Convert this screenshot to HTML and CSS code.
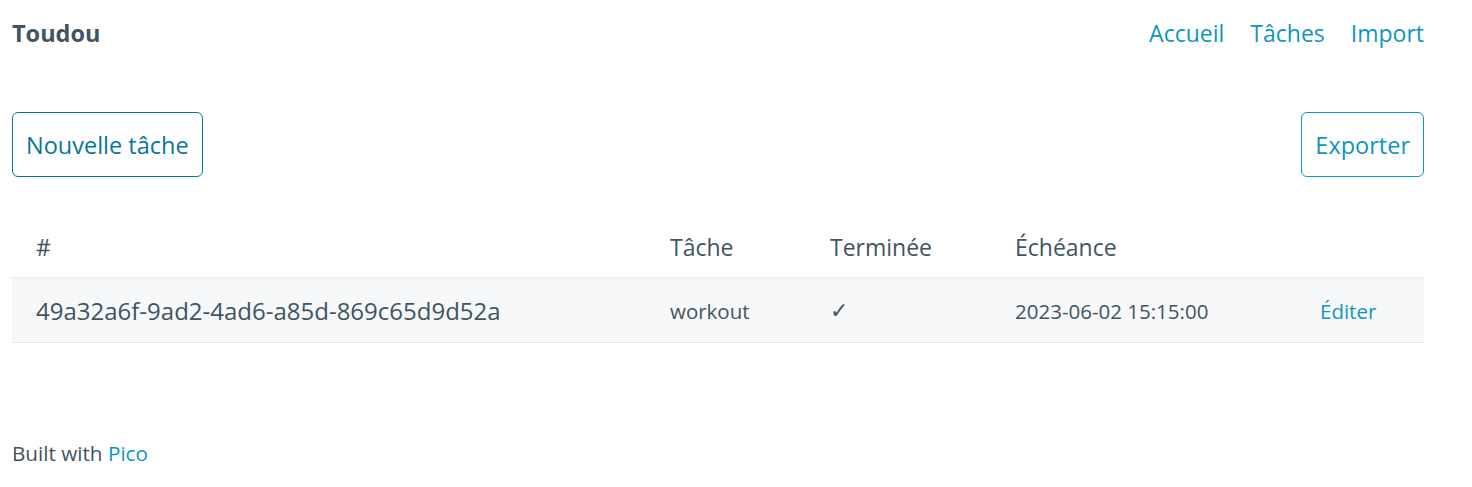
FILE: index.html
```html
<!DOCTYPE html>
<html lang="fr">
<head>
<meta charset="utf-8">
<title>Toudou</title>
<link rel="stylesheet" href="styles.css">
</head>
<body>
<nav class="topbar">
  <strong class="brand">Toudou</strong>
  <ul class="menu">
    <li><a href="#">Accueil</a></li>
    <li><a href="#">Tâches</a></li>
    <li><a href="#">Import</a></li>
  </ul>
</nav>
<main class="content">
  <div class="actions">
    <a href="#" class="btn btn-active">Nouvelle tâche</a>
    <a href="#" class="btn">Exporter</a>
  </div>
  <table class="tasks">
    <colgroup>
      <col class="c-id"><col class="c-task"><col class="c-done"><col class="c-due"><col class="c-edit">
    </colgroup>
    <thead>
      <tr><th>#</th><th>Tâche</th><th>Terminée</th><th>Échéance</th><th></th></tr>
    </thead>
    <tbody>
      <tr>
        <td class="id">49a32a6f-9ad2-4ad6-a85d-869c65d9d52a</td>
        <td>workout</td>
        <td class="check">✓</td>
        <td>2023-06-02 15:15:00</td>
        <td><a href="#">Éditer</a></td>
      </tr>
    </tbody>
  </table>
</main>
<footer class="foot">Built with <a href="#">Pico</a></footer>
</body>
</html>
```

FILE: styles.css
```css
html, body { margin: 0; padding: 0; background: #fff; }
body {
  font-family: "Open Sans", "Noto Sans", sans-serif;
  color: #415462;
  padding: 0 48px 0 12px;
}
a { color: #1095c1; text-decoration: none; }

.topbar {
  display: flex;
  justify-content: space-between;
  align-items: center;
  height: 66px;
}
.brand { font-size: 23.5px; font-weight: 700; color: #415462; }
.menu { display: flex; gap: 26px; list-style: none; margin: 0; padding: 0; font-size: 23px; }

.content { padding-top: 46px; }
.actions { display: flex; justify-content: space-between; }
.btn {
  display: flex;
  align-items: center;
  height: 63px;
  padding: 0 13px;
  border: 1px solid #1095c1;
  border-radius: 6px;
  font-size: 23.5px;
  color: #1095c1;
}
.btn-active { color: #08769b; border-color: #08769b; }

.tasks {
  width: 100%;
  margin-top: 40px;
  border-collapse: collapse;
  table-layout: fixed;
}
.c-id { width: 634px; }
.c-task { width: 160px; }
.c-done { width: 185px; }
.c-due { width: 305px; }
.tasks th {
  height: 60px;
  text-align: left;
  font-weight: 400;
  font-size: 23px;
  padding: 0 24px;
  border-bottom: 2px solid #edf0f3;
}
.tasks td {
  height: 63px;
  padding: 0 24px;
  font-size: 20.5px;
  background: #f6f8f9;
  border-bottom: 1px solid #e1e6eb;
  white-space: nowrap;
}
.tasks td.id { font-size: 24px; }
.tasks td.check { font-family: "DejaVu Sans", sans-serif; font-size: 22px; }

.foot { margin-top: 96px; font-size: 20.7px; }
```
